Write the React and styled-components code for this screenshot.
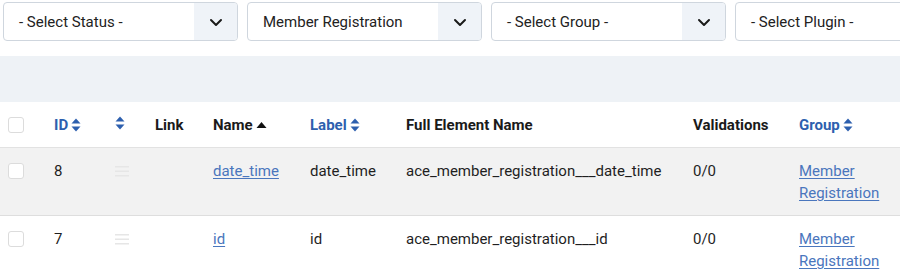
import React from "react";
import styled, { createGlobalStyle } from "styled-components";

const Global = createGlobalStyle`
  html, body { margin: 0; padding: 0; background: #fff; overflow: hidden; }
  body { font-family: Roboto, "Noto Sans", Arial, sans-serif; color: #1f1f1f; }
`;

const Page = styled.div`
  width: 900px;
  overflow: hidden;
`;

const Filters = styled.div`
  display: flex;
  gap: 9px;
  padding: 2px 0 0 3px;
  width: max-content;
`;

const Select = styled.div`
  width: 235px;
  height: 39px;
  box-sizing: border-box;
  border: 1px solid #cfd6de;
  border-radius: 4px;
  display: flex;
  align-items: stretch;
  overflow: hidden;
  background: #fff;
`;

const SelectText = styled.div`
  flex: 1;
  display: flex;
  align-items: center;
  padding-left: 15px;
  font-size: 15px;
  color: #222;
`;

const Arrow = styled.div`
  width: 43px;
  background: #eff3f8;
  display: flex;
  align-items: center;
  justify-content: center;
`;

const Band = styled.div`
  margin-top: 15px;
  height: 46px;
  background: #eef2f6;
`;

const Table = styled.table`
  width: 900px;
  table-layout: fixed;
  border-collapse: collapse;
  font-size: 15px;
`;

const Th = styled.th`
  text-align: left;
  font-weight: 700;
  padding: 12px 0 11px 8px;
  line-height: 22px;
  color: ${(p) => (p.$sort ? "#2d5fae" : "#1a1a1a")};
  border-bottom: 1px solid #e2e2e2;
  white-space: nowrap;
`;

const Tr = styled.tr`
  background: ${(p) => (p.$alt ? "#f2f2f2" : "#fff")};
  border-bottom: 1px solid #dedede;
`;

const Td = styled.td`
  padding: 12px 0 11px 8px;
  line-height: 22px;
  vertical-align: top;
  color: #1f1f1f;
`;

const Link = styled.a`
  color: #4a76bd;
  text-decoration: underline;
  text-underline-offset: 2px;
`;

const Check = styled.span`
  display: inline-block;
  width: 14px;
  height: 14px;
  border: 1px solid #dcdcdc;
  border-radius: 3px;
  background: #fff;
  vertical-align: middle;
  margin-top: -3px;
`;

const Head = styled.span`
  display: inline-flex;
  align-items: center;
  gap: 3px;
`;

const SortBoth = () => (
  <svg width="10" height="14" viewBox="0 0 10 14">
    <path d="M5 0.5 L9.5 5.5 H0.5 Z" fill="#2d5fae" />
    <path d="M5 13.5 L9.5 8.5 H0.5 Z" fill="#2d5fae" />
  </svg>
);

const SortUp = () => (
  <svg width="11" height="8" viewBox="0 0 11 8">
    <path d="M5.5 1 L10.5 7 H0.5 Z" fill="#111" />
  </svg>
);

const Chevron = () => (
  <svg width="16" height="16" viewBox="0 0 16 16">
    <path d="M3 6 L8 11 L13 6" fill="none" stroke="#1a1a1a" strokeWidth="2" strokeLinecap="round" strokeLinejoin="round" />
  </svg>
);

const Handle = () => (
  <svg width="14" height="12" viewBox="0 0 14 12" style={{ verticalAlign: "middle", marginTop: -3 }}>
    <rect x="0" y="1" width="14" height="1.5" fill="#e6e6e6" />
    <rect x="0" y="5.5" width="14" height="1.5" fill="#e6e6e6" />
    <rect x="0" y="10" width="14" height="1.5" fill="#e6e6e6" />
  </svg>
);

const filters = ["- Select Status -", "Member Registration", "- Select Group -", "- Select Plugin -"];

const rows = [
  { id: 8, name: "date_time", full: "ace_member_registration___date_time" },
  { id: 7, name: "id", full: "ace_member_registration___id" },
];

export default function App() {
  return (
    <Page>
      <Global />
      <Filters>
        {filters.map((f) => (
          <Select key={f}>
            <SelectText>{f}</SelectText>
            <Arrow>
              <Chevron />
            </Arrow>
          </Select>
        ))}
      </Filters>
      <Band />
      <Table>
        <colgroup>
          <col style={{ width: 46 }} />
          <col style={{ width: 61 }} />
          <col style={{ width: 40 }} />
          <col style={{ width: 58 }} />
          <col style={{ width: 97 }} />
          <col style={{ width: 96 }} />
          <col style={{ width: 287 }} />
          <col style={{ width: 106 }} />
          <col style={{ width: 109 }} />
        </colgroup>
        <thead>
          <tr>
            <Th><Check /></Th>
            <Th $sort><Head>ID<SortBoth /></Head></Th>
            <Th $sort><Head><SortBoth /></Head></Th>
            <Th>Link</Th>
            <Th><Head>Name<SortUp /></Head></Th>
            <Th $sort><Head>Label<SortBoth /></Head></Th>
            <Th>Full Element Name</Th>
            <Th>Validations</Th>
            <Th $sort><Head>Group<SortBoth /></Head></Th>
          </tr>
        </thead>
        <tbody>
          {rows.map((r, i) => (
            <Tr key={r.id} $alt={i === 0}>
              <Td><Check /></Td>
              <Td>{r.id}</Td>
              <Td><Handle /></Td>
              <Td></Td>
              <Td><Link href="#">{r.name}</Link></Td>
              <Td>{r.name}</Td>
              <Td>{r.full}</Td>
              <Td>0/0</Td>
              <Td><Link href="#">Member Registration</Link></Td>
            </Tr>
          ))}
        </tbody>
      </Table>
    </Page>
  );
}
